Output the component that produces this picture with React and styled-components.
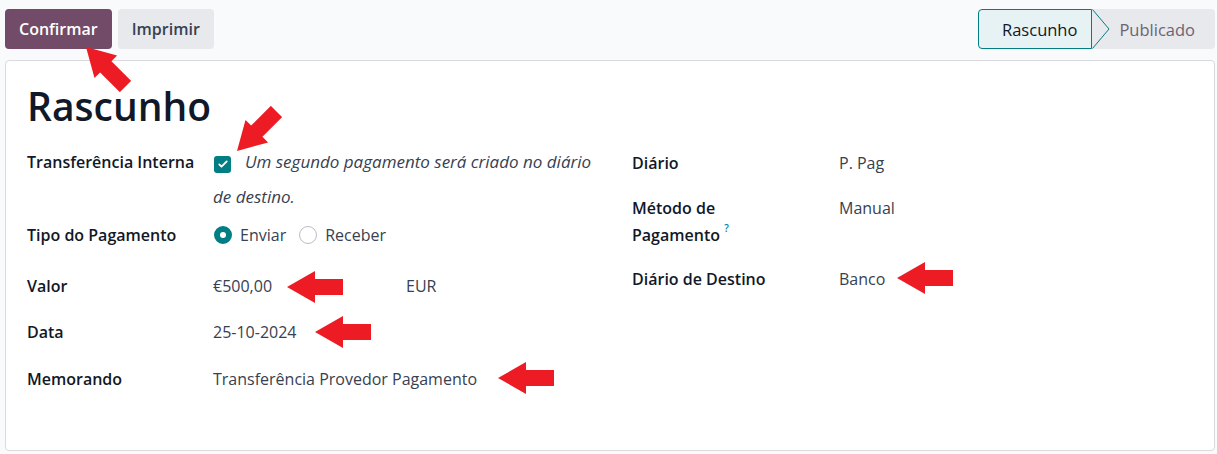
import React from "react";
import styled, { createGlobalStyle } from "styled-components";

const GlobalStyle = createGlobalStyle`
  body {
    margin: 0;
    background: #f9fafb;
    font-family: "Open Sans", "Noto Sans", sans-serif;
    color: #374151;
  }
`;

const ARROWS = [
  { x: 86, y: 47, rot: 45 },
  { x: 237, y: 151, rot: -45 },
  { x: 287, y: 287, rot: 0 },
  { x: 315, y: 332, rot: 0 },
  { x: 498, y: 378, rot: 0 },
  { x: 897, y: 278, rot: 0 }
];

export default function App() {
  return (
    <Page>
      <GlobalStyle />
      <ControlPanel>
        <Actions>
          <Button $primary>Confirmar</Button>
          <Button>Imprimir</Button>
        </Actions>
        <StatusBar>
          <Stage $active>Rascunho</Stage>
          <Stage>
            <Chevron viewBox="0 0 18 40" width="18" height="40">
              <polyline
                points="0.5,0.5 17,20 0.5,39.5"
                fill="none"
                stroke="#017e84"
                strokeWidth="1"
              />
            </Chevron>
            Publicado
          </Stage>
        </StatusBar>
      </ControlPanel>

      <Sheet>
        <Title>Rascunho</Title>
        <Groups>
          <Group $labelWidth={186}>
            <Field $lh={35}>
              <Label>Transferência Interna</Label>
              <Value>
                <Hint>
                  <Checkbox>
                    <svg viewBox="0 0 16 16" width="12" height="12">
                      <path
                        d="M3 8.5l3 3 7-7"
                        fill="none"
                        stroke="#fff"
                        strokeWidth="2.4"
                        strokeLinecap="round"
                        strokeLinejoin="round"
                      />
                    </svg>
                  </Checkbox>
                  <em>Um segundo pagamento será criado no diário de destino.</em>
                </Hint>
              </Value>
            </Field>
            <Field $mt={8}>
              <Label>Tipo do Pagamento</Label>
              <Value>
                <Radios>
                  <Radio>
                    <RadioDot $checked />
                    Enviar
                  </Radio>
                  <Radio>
                    <RadioDot />
                    Receber
                  </Radio>
                </Radios>
              </Value>
            </Field>
            <Field $mt={27}>
              <Label>Valor</Label>
              <Value>
                <Amount>€500,00</Amount>EUR
              </Value>
            </Field>
            <Field $mt={22}>
              <Label>Data</Label>
              <Value>25-10-2024</Value>
            </Field>
            <Field $mt={23}>
              <Label>Memorando</Label>
              <Value>Transferência Provedor Pagamento</Value>
            </Field>
          </Group>

          <Group $labelWidth={207}>
            <Field $mt={6}>
              <Label>Diário</Label>
              <Value>P. Pag</Value>
            </Field>
            <Field $mt={20} $lh={27}>
              <Label>
                Método de
                <br />
                Pagamento <Help>?</Help>
              </Label>
              <Value>Manual</Value>
            </Field>
            <Field $mt={18}>
              <Label>Diário de Destino</Label>
              <Value>Banco</Value>
            </Field>
          </Group>
        </Groups>
      </Sheet>

      {ARROWS.map((a, i) => (
        <Arrow key={i} $x={a.x} $y={a.y} $rot={a.rot} viewBox="0 0 56 32" width="56" height="32">
          <polygon points="0,16 28,0 28,8 56,8 56,24 28,24 28,32" fill="#ed1c24" />
        </Arrow>
      ))}
    </Page>
  );
}

const Page = styled.div`
  position: relative;
  padding: 9px 2px 0 5px;
  height: 445px;
`;

const ControlPanel = styled.div`
  display: flex;
  justify-content: space-between;
  align-items: center;
  height: 40px;
`;

const Actions = styled.div`
  display: flex;
  gap: 6px;
`;

const Button = styled.button`
  height: 40px;
  padding: 0 14px;
  border: 0;
  border-radius: 4px;
  font-family: inherit;
  font-size: 16px;
  font-weight: 600;
  background: ${(p) => (p.$primary ? "#714b67" : "#e7e9ed")};
  color: ${(p) => (p.$primary ? "#fff" : "#374151")};
`;

const StatusBar = styled.div`
  display: flex;
  height: 40px;
`;

const Stage = styled.div`
  display: flex;
  align-items: center;
  box-sizing: border-box;
  height: 40px;
  font-size: 16.5px;
  font-weight: 500;
  ${(p) =>
    p.$active
      ? `
    padding: 0 14px 0 23px;
    background: #e6f2f3;
    border: 1px solid #017e84;
    border-radius: 4px 0 0 4px;
    color: #111827;
  `
      : `
    padding: 0 20px 0 0;
    background: #e7e9ed;
    border-radius: 0 4px 4px 0;
    color: #6b6470;
  `}
`;

const Chevron = styled.svg`
  display: block;
  margin-right: 9px;
`;

const Sheet = styled.div`
  margin-top: 11px;
  box-sizing: border-box;
  height: 391px;
  padding: 24px 21px 0;
  background: #fff;
  border: 1px solid #d8dadd;
  border-radius: 4px;
`;

const Title = styled.h1`
  margin: 0;
  font-size: 39px;
  line-height: 42px;
  font-weight: 600;
  color: #111827;
`;

const Groups = styled.div`
  display: grid;
  grid-template-columns: 605px 1fr;
  margin-top: 18px;
`;

const Group = styled.div`
  display: flex;
  flex-direction: column;
  --label-width: ${(p) => p.$labelWidth}px;
`;

const Field = styled.div`
  display: grid;
  grid-template-columns: var(--label-width) 1fr;
  margin-top: ${(p) => p.$mt || 0}px;
  font-size: 16px;
  line-height: ${(p) => p.$lh || 24}px;
`;

const Label = styled.div`
  font-weight: 600;
  color: #111827;
`;

const Value = styled.div`
  color: #374151;
  display: flex;
`;

const Hint = styled.div`
  max-width: 382px;
  em {
    font-style: italic;
    font-size: 17px;
    line-height: 1;
  }
`;

const Checkbox = styled.span`
  display: inline-flex;
  align-items: center;
  justify-content: center;
  width: 17px;
  height: 17px;
  margin: 0 14px 0 1px;
  vertical-align: -2px;
  border-radius: 3px;
  background: #017e84;
`;

const Radios = styled.div`
  display: flex;
  align-items: center;
  gap: 12px;
`;

const Radio = styled.label`
  display: flex;
  align-items: center;
  gap: 8px;
`;

const RadioDot = styled.span`
  box-sizing: border-box;
  width: 18px;
  height: 18px;
  border-radius: 50%;
  margin-left: 1px;
  background: #fff;
  border: ${(p) => (p.$checked ? "6px solid #017e84" : "1px solid #b9bec6")};
`;

const Amount = styled.span`
  width: 193px;
`;

const Help = styled.sup`
  font-size: 10px;
  font-weight: 600;
  color: #0180a5;
  vertical-align: 9px;
  line-height: 0;
`;

const Arrow = styled.svg`
  position: absolute;
  left: ${(p) => p.$x}px;
  top: ${(p) => p.$y - 16}px;
  transform-origin: 0 16px;
  transform: rotate(${(p) => p.$rot}deg);
`;
